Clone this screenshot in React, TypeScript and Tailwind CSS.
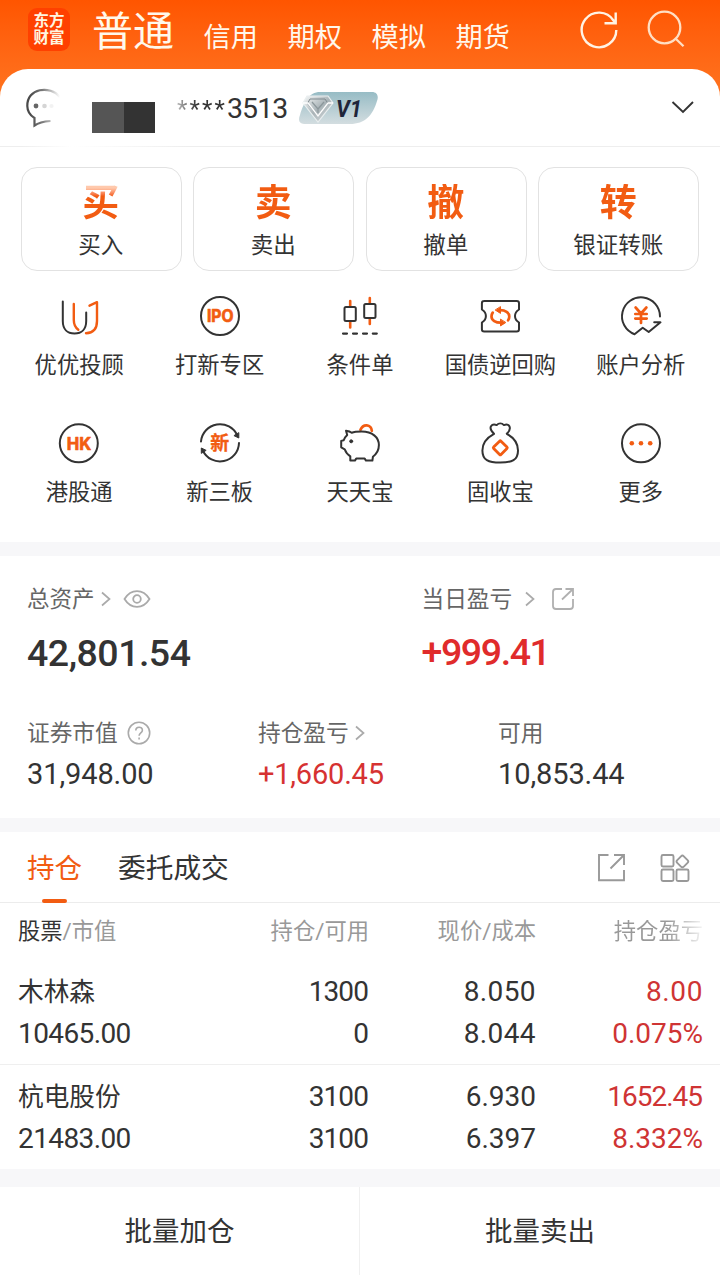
import React from "react";

const dark = "#333333";
const orange = "#f25c12";

function Glyph({ box, children }: { box: string; children: React.ReactNode }) {
  return (
    <svg className="block h-12 w-12" viewBox={box} fill="none" stroke={dark} strokeWidth="2" strokeLinecap="round" strokeLinejoin="round">
      {children}
    </svg>
  );
}

const shortcuts = [
  {
    label: "优优投顾",
    icon: (
      <Glyph box="55.5 292 48 48">
        <path d="M63.3 301.5V321c0 8 4.500 12.500 11.700 12.500S86.700 329 86.700 321V312.500" />
        <path d="M74.300 304V320c0 5 1.500 7.500 4.500 9.800M86.500 333.300c7-.3 11-4.500 11-12.300V302.200l-7.500 3.500" stroke={orange} strokeWidth="2.4" />
      </Glyph>
    ),
  },
  {
    label: "打新专区",
    icon: (
      <Glyph box="195.7 292 48 48">
        <circle cx="219.700" cy="316" r="19" />
        <text x="206.600" y="322.300" textLength="26.500" lengthAdjust="spacingAndGlyphs" fill={orange} stroke={orange} strokeWidth=".7" className="font-['Inter'] text-[17px] font-bold">IPO</text>
      </Glyph>
    ),
  },
  {
    label: "条件单",
    icon: (
      <Glyph box="336.5 292 48 48">
        <path d="M350.700 301v5M350.700 322v5.500M370.300 298v5M370.300 319v5" stroke={orange} strokeWidth="2.600" />
        <rect x="345" y="307" width="11.300" height="14" rx="1.500" />
        <rect x="364.700" y="304" width="11.300" height="14" rx="1.500" />
        <path d="M343.500 333.600h4M353.500 333.600h4M363.500 333.600h4M373.300 333.600h4" strokeWidth="2.200" />
      </Glyph>
    ),
  },
  {
    label: "国债逆回购",
    icon: (
      <Glyph box="476.500 292 48 48">
        <path d="M484.500 301H517.200c1.400 0 2.300.9 2.300 2.300V309.500c-3.300 2-4 4.200-4 6.500s.7 4.500 4 6.500V329.200c0 1.400-.9 2.300-2.300 2.300H484.700c-1.400 0-2.300-.9-2.300-2.300V322.500c3.300-2 4-4.200 4-6.500s-.7-4.500-4-6.500V303.300c0-1.400.9-2.300 2.300-2.300Z" />
        <path d="M500 310.200c6-.2 9.800 2.500 9.800 6.300 0 1.400-.4 2.700-1.200 3.800M502 322.700c-6 .2-10-2.500-10-6.300 0-1.400.4-2.700 1.200-3.800" stroke={orange} strokeWidth="2.700" />
        <path d="M501 307v6.400l-5-3.200ZM501 319.500v6.400l5-3.200Z" fill={orange} stroke={orange} strokeWidth="1" />
      </Glyph>
    ),
  },
  {
    label: "账户分析",
    icon: (
      <Glyph box="617 292 48 48">
        <path d="M660 316.500A19 19 0 1 0 634.500 334.200L642.700 327.700L648.700 332L660.500 322.300H654.200" />
        <path d="M635.600 307.500l5.400 6 5.400-6M641 313.500v9.500M635.300 314h11.400M635.300 318.600h11.400" stroke={orange} strokeWidth="2.700" />
      </Glyph>
    ),
  },
  {
    label: "港股通",
    icon: (
      <Glyph box="55.5 419 48 48">
        <circle cx="79.300" cy="443.300" r="19" />
        <text x="67.300" y="449.500" textLength="24.500" lengthAdjust="spacingAndGlyphs" fill={orange} stroke={orange} strokeWidth=".7" className="font-['Inter'] text-[17px] font-bold">HK</text>
      </Glyph>
    ),
  },
  {
    label: "新三板",
    icon: (
      <Glyph box="195.7 419 48 48">
        <path d="M200.700 441.500A19 19 0 0 1 237 435.500M238.700 443A19 19 0 0 1 202.500 450.500" />
        <path d="M238.500 433v5l-4.500-2.200ZM201 453v-5l4.500 2.200Z" fill={dark} strokeWidth="1" />
        <text x="210" y="450" fill={orange} stroke={orange} strokeWidth=".3" className="font-['Noto_Sans_CJK_SC'] text-[19px] font-bold">新</text>
      </Glyph>
    ),
  },
  {
    label: "天天宝",
    icon: (
      <Glyph box="336.5 419 48 48">
        <path d="M361 429.800c1.300-3 3.700-4.600 6.300-4.400 3 .2 4.900 2.600 5 5.400" stroke={orange} strokeWidth="2.800" />
        <path d="M346.500 430.800c2 .3 4 .7 5.700 2 2.500-1 6-1.200 10-1.200 10.500 0 17.200 5.500 17.200 13.500 0 5.500-2.700 9.200-6 11.700l-.5 3.800h-6.400l-1.300-2h-8.500l-1.300 2h-4.600v-4.300c-2.700-1.800-4.600-4-5.600-7l-3.500-2v-6.400l2.500-.7c.7-2.200 2-3.800 3.500-5.200Z" />
        <circle cx="351.700" cy="441.300" r="1.500" fill={dark} strokeWidth="1" />
      </Glyph>
    ),
  },
  {
    label: "固收宝",
    icon: (
      <Glyph box="476.500 419 48 48">
        <path d="M494.500 433.800c-2.700-2.500-4.200-5.300-3-7.500 1.200-1.900 3.800-2 5.700-1.200 2-2 5.200-2 7.200 0 2-.8 4.500-.6 5.500 1.200 1.200 2.200-.2 5-2.600 7.500 6.700 3.700 11.200 9.700 11.200 16.600 0 9.700-6 12.200-17.800 12.200s-17.800-2.500-17.800-12.200c0-6.900 4.800-12.900 11.600-16.600Z" />
        <rect x="495.600" y="442.600" width="10.400" height="10.400" rx="1" transform="rotate(45 500.800 447.800)" stroke={orange} strokeWidth="2.800" />
      </Glyph>
    ),
  },
  {
    label: "更多",
    icon: (
      <Glyph box="617 419 48 48">
        <circle cx="641" cy="443.300" r="19" />
        <g fill={orange} stroke="none">
          <circle cx="631.800" cy="443.300" r="2.300" />
          <circle cx="641" cy="443.300" r="2.300" />
          <circle cx="650.200" cy="443.300" r="2.300" />
        </g>
      </Glyph>
    ),
  },
];

const trades = [
  ["买", "买入"],
  ["卖", "卖出"],
  ["撤", "撤单"],
  ["转", "银证转账"],
];

const holdings = [
  { name: "木林森", value: "10465.00", held: "1300", free: "0", price: "8.050", cost: "8.044", gain: "8.00", rate: "0.075%" },
  { name: "杭电股份", value: "21483.00", held: "3100", free: "3100", price: "6.930", cost: "6.397", gain: "1652.45", rate: "8.332%" },
];

function Chevron() {
  return (
    <svg className="h-4 w-[10px]" viewBox="0 0 10 16" fill="none" stroke="#aaaaaa" strokeWidth="1.700">
      <path d="M1 1.500 8.500 8 1 14.500" />
    </svg>
  );
}

function Header() {
  return (
    <header className="flex h-[69px] items-start pl-7 text-[#fff8ec]">
      <div className="mt-[8px] flex h-[43px] w-[42px] flex-col items-center justify-center rounded-[9px] bg-[#ff4000] text-[15.500px] font-bold leading-[17px] text-[#fff6e0]">
        <span>东方</span>
        <span>财富</span>
      </div>
      <span className="ml-[22px] mt-[8px] w-[111.500px] text-[41px] leading-[48px]">普通</span>
      <nav className="mt-[21px] flex gap-[29.600px] text-[27.200px] leading-[34px]">
        <span>信用</span>
        <span>期权</span>
        <span>模拟</span>
        <span>期货</span>
      </nav>
      <svg className="ml-[69.500px] mt-[8px] h-[44px] w-[44px]" viewBox="580 8 44 44" fill="none" stroke="#fff3e4" strokeWidth="2.400">
        <path d="M617.300 30A17.300 17.300 0 1 1 614.500 20.500L616.500 23.300M616.700 12.500V23.300H605.500" />
      </svg>
      <svg className="ml-[22px] mt-[8px] h-[44px] w-[44px]" viewBox="646 8 44 44" fill="none" stroke="#ffdfc4" strokeWidth="2.300">
        <circle cx="665.500" cy="27.500" r="15.800" />
        <path d="M676.500 38.500 684.500 46.300" />
      </svg>
    </header>
  );
}

function Account() {
  return (
    <div className="flex h-[77px] items-center pl-[24px] pr-[26px]">
      <svg className="h-[44px] w-[40px]" viewBox="24 85 40 44" fill="none">
        <defs>
          <linearGradient id="bubble" gradientUnits="userSpaceOnUse" x1="30" y1="0" x2="60" y2="0">
            <stop offset="0" stopColor="#4a4a4a" />
            <stop offset=".4" stopColor="#777777" />
            <stop offset="1" stopColor="#ffffff" />
          </linearGradient>
        </defs>
        <path d="M60 96C50 84 27 87 27.300 105c.1 5.500 3 9.500 7.200 12v7.500c5-3.500 9-4 16-4.500" stroke="url(#bubble)" strokeWidth="2.200" />
        <circle cx="36" cy="105" r="2.400" fill="#666666" />
        <circle cx="44.500" cy="105" r="2.300" fill="#d5d5d5" />
        <circle cx="51.500" cy="105" r="2.100" fill="#f2f2f2" />
      </svg>
      <div className="ml-[28px] mt-[20px] flex h-[31px] w-[63px]">
        <div className="w-1/2 bg-[#555555]" />
        <div className="w-1/2 bg-[#333333]" />
      </div>
      <div className="ml-[22px] mt-[3px] flex w-[122px] items-center text-[28.500px] text-[#333]">
        <span className="w-[50px] bg-linear-to-r from-[#bbbbbb] to-[#333333] to-40% bg-clip-text text-[24px] tracking-[2.200px] text-transparent">****</span>
        <span className="tracking-[-0.900px]">3513</span>
      </div>
      <svg className="h-[34px] w-[80px]" viewBox="299 90 80 34">
        <defs>
          <linearGradient id="badge" x1="0" y1="0" x2="0" y2="1">
            <stop offset="0" stopColor="#97bcc5" />
            <stop offset="1" stopColor="#d3dde0" />
          </linearGradient>
          <linearGradient id="gem" x1="0" y1="0" x2="1" y2="1">
            <stop offset="0" stopColor="#f8fafa" />
            <stop offset=".5" stopColor="#a9b3b7" />
            <stop offset="1" stopColor="#dce2e4" />
          </linearGradient>
        </defs>
        <path d="M320 91H372C377 91 379 95 377 100C373 114 365 123 350 123H304C299 123 298 119 300 114C304 101 309 91 320 91Z" fill="url(#badge)" />
        <path d="M307 95H328L333 102 318 121 303 102Z" fill="url(#gem)" stroke="#e9eeef" strokeWidth="1.200" />
        <path d="M310 98H325L328 102.500 318 115 307.500 102.500Z" fill="none" stroke="#7f898e" strokeWidth="1" />
        <path d="M303 102 308 102 318 115 328 102H333" fill="none" stroke="#ffffff" strokeWidth="1.300" />
        <path d="M312 101 318 108 324 101M318 108V112" fill="none" stroke="#8c979b" strokeWidth="1.200" />
        <text x="336" y="115.500" textLength="26" lengthAdjust="spacingAndGlyphs" fill="#1f2539" className="font-['Roboto'] text-[24px] font-bold italic">V1</text>
      </svg>
      <svg className="ml-auto h-[14px] w-[24px]" viewBox="0 0 24 14" fill="none" stroke="#333333" strokeWidth="1.900">
        <path d="M2.500 1 13 11 23 1" />
      </svg>
    </div>
  );
}

function Assets() {
  return (
    <section className="h-[262px] shrink-0 text-[#666]">
      <div className="flex h-[128px] pl-[27px] pt-[27px]">
        <div className="w-[394.500px]">
          <div className="flex h-8 items-center text-[22.500px]">
            <span>总资产</span>
            <span className="ml-[6px]"><Chevron /></span>
            <svg className="ml-[12.500px] h-5 w-[28px]" viewBox="0 0 28 20" fill="none" stroke="#aaaaaa" strokeWidth="1.800">
              <path d="M1.500 10C8-.5 20-.5 26.500 10 20 20.500 8 20.500 1.500 10Z" />
              <circle cx="14" cy="10" r="3.800" />
            </svg>
          </div>
          <div className="mt-[14px] text-[37.500px] font-medium leading-[48px] tracking-[-0.500px] text-[#333]">42,801.54</div>
        </div>
        <div>
          <div className="flex h-8 items-center text-[22.700px]">
            <span className="pt-[2px]">当日盈亏</span>
            <span className="ml-[13px]"><Chevron /></span>
            <svg className="ml-[16px] h-6 w-6" viewBox="0 0 24 24" fill="none" stroke="#b0b0b0" strokeWidth="1.800">
              <path d="M11 2H5Q2 2 2 5V19Q2 22 5 22H19Q22 22 22 19V12M14.500 2H22V9M22 2 11 12.500" />
            </svg>
          </div>
          <div className="mt-[13px] text-[37.500px] font-medium leading-[48px] tracking-[-1.400px] text-[#e02b2b]">+999.41</div>
        </div>
      </div>
      <div className="flex pl-[27px] pt-[33px]">
        <div className="w-[231px]">
          <div className="flex h-8 items-center text-[22.700px]">
            <span className="pt-[2px]">证券市值</span>
            <svg className="ml-[9px] h-6 w-6" viewBox="0 0 24 24" fill="none" stroke="#aaaaaa" strokeWidth="1.600">
              <circle cx="12" cy="12" r="10.700" />
              <path d="M8.800 9.500c0-4.500 6.600-4.300 6.600-.2 0 2.700-3.300 2.600-3.300 5.500M12.100 16.500v2" />
            </svg>
          </div>
          <div className="mt-[7px] text-[29px] leading-[36px] tracking-[-0.100px] text-[#333]">31,948.00</div>
        </div>
        <div className="w-[240px]">
          <div className="flex h-8 items-center text-[22.700px]">
            <span className="pt-[2px]">持仓盈亏</span>
            <span className="ml-[6px]"><Chevron /></span>
          </div>
          <div className="mt-[7px] text-[29px] leading-[36px] tracking-[-0.200px] text-[#d63232]">+1,660.45</div>
        </div>
        <div>
          <div className="flex h-8 items-center pt-[2px] text-[22.700px]">可用</div>
          <div className="mt-[7px] text-[29px] leading-[36px] tracking-[-0.100px] text-[#333]">10,853.44</div>
        </div>
      </div>
    </section>
  );
}

const columns = "grid shrink-0 grid-cols-[200px_151px_167px_167px]";

export default function App() {
  return (
    <div className="flex h-[1275px] w-[720px] flex-col overflow-hidden whitespace-nowrap bg-white font-['Roboto','Noto_Sans_CJK_SC',sans-serif] leading-none text-[#333]">
      <div className="shrink-0 bg-linear-to-b from-[#ff5500] to-[#ff741f] to-[98px]">
        <Header />
        <div className="rounded-t-[28px] bg-white">
          <Account />
          <div className="h-px bg-linear-to-r from-[#eeeeee] from-[3%] via-white via-[10%] to-[#eeeeee] to-[26%]" />
          <div className="grid grid-cols-4 gap-[11.800px] px-[21px] pt-5">
            {trades.map(([mark, label]) => (
              <div key={label} className="flex h-[104px] flex-col items-center rounded-[16px] border border-[#e2e2e2] pr-px pt-[16px]">
                <span className={"bg-clip-text text-[37px] font-bold leading-[40px] text-transparent " + (mark === "买" ? "bg-linear-to-b from-[#ffc9ac] from-[10%] to-[#f25c12] to-[30%]" : "bg-[#f25c12]")}>{mark}</span>
                <span className="mt-[5px] text-[22.500px] leading-[32px]">{label}</span>
              </div>
            ))}
          </div>
        </div>
      </div>
      <div className="grid h-[271px] shrink-0 grid-cols-5 content-start px-[9px] pt-[21px]">
        {shortcuts.map((s) => (
          <div key={s.label} className="flex h-[127px] flex-col items-center">
            {s.icon}
            <span className="mt-[9px] text-[22.300px] leading-[32px]">{s.label}</span>
          </div>
        ))}
      </div>
      <div className="h-[14px] shrink-0 bg-[#f7f7f9]" />
      <Assets />
      <div className="h-[14px] shrink-0 bg-[#f7f7f9]" />
      <div className="flex h-[71px] shrink-0 border-b border-[#ececec] pl-[27px] pr-[30px] text-[27.500px]">
        <div className="flex flex-col items-center text-[#f25c12]">
          <span className="mt-[18px] leading-[38px]">持仓</span>
          <div className="mt-[11px] h-[4px] w-[25px] shrink-0 rounded-full bg-[#f25c12]" />
        </div>
        <span className="ml-[36px] mt-[18px] text-[27.700px] leading-[38px]">委托成交</span>
        <svg className="ml-auto mt-[21px] h-[29px] w-[29px]" viewBox="597 853 29 29" fill="none" stroke="#999999" strokeWidth="1.900">
          <path d="M608.500 855H599V880.300H624V870M614 855H624V865M624 855 610.500 868.500" />
        </svg>
        <svg className="ml-[34px] mt-[21px] h-[30px] w-[30px]" viewBox="660 853 30 30" fill="none" stroke="#999999" strokeWidth="1.900">
          <rect x="661.500" y="855" width="12" height="11.500" rx="1.500" />
          <rect x="661.500" y="869.500" width="12" height="11.500" rx="1.500" />
          <rect x="676.500" y="869.500" width="12" height="11.500" rx="1.500" />
          <rect x="677.800" y="856.800" width="9.300" height="9.300" rx="2" transform="rotate(45 682.400 861.400)" />
        </svg>
      </div>
      <div className={columns + " h-[57px] items-center pl-[18px] text-right text-[22.300px] text-[#999]"}>
        <span className="text-left"><span className="text-[#333]">股票</span>/市值</span>
        <span>持仓/可用</span>
        <span>现价/成本</span>
        <span className="ml-auto bg-linear-to-r from-[#999999] from-[60%] to-[#f4f4f4] bg-clip-text text-transparent">持仓盈亏</span>
      </div>
      {holdings.map((h, i) => (
        <div key={h.name} className={columns + " pl-[18px] pt-[11px] text-right text-[28px] leading-[42px] " + (i === 0 ? "h-[105px] border-b border-[#efefef]" : "h-[104px]")}>
          <div className="text-left">
            <div className="text-[25.700px]">{h.name}</div>
            <div className="tracking-[-0.600px]">{h.value}</div>
          </div>
          <div className="pr-px tracking-[-0.900px]"><div>{h.held}</div><div>{h.free}</div></div>
          <div className={i === 0 ? "tracking-[0.400px]" : "tracking-normal"}><div>{h.price}</div><div>{h.cost}</div></div>
          <div className="text-[#cf3434]">
            <div className={i === 0 ? "tracking-[0.600px]" : "pr-px tracking-[-1px]"}>{h.gain}</div>
            <div>{h.rate}</div>
          </div>
        </div>
      ))}
      <div className="h-[18px] shrink-0 bg-[#f7f7f9]" />
      <div className="grid flex-1 grid-cols-2 text-center text-[27.500px] leading-[90px]">
        <span className="border-r border-[#f0f0f0]">批量加仓</span>
        <span>批量卖出</span>
      </div>
    </div>
  );
}
